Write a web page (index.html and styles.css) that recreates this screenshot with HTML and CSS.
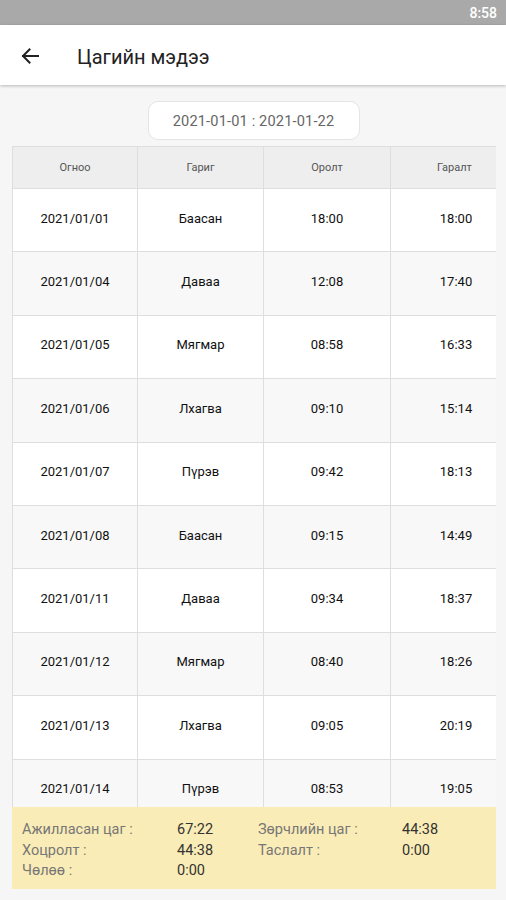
FILE: index.html
```html
<!DOCTYPE html>
<html lang="mn">
<head>
<meta charset="utf-8">
<title>Цагийн мэдээ</title>
<link rel="stylesheet" href="styles.css">
</head>
<body>
<div class="phone">
  <div class="statusbar"><span class="time">8:58</span></div>
  <header class="appbar">
    <svg class="back" width="18" height="16" viewBox="0 0 18 16" aria-hidden="true">
      <path d="M17 8H2M8.5 1.5L2 8l6.5 6.5" fill="none" stroke="#222" stroke-width="2" stroke-linecap="square"/>
    </svg>
    <h1 class="title">Цагийн мэдээ</h1>
  </header>
  <main class="content">
    <div class="range-wrap"><div class="range">2021-01-01 : 2021-01-22</div></div>
    <div class="table-wrap">
      <table class="tbl">
        <colgroup><col class="c1"><col class="c2"><col class="c3"><col class="c4"></colgroup>
        <thead>
          <tr><th>Огноо</th><th>Гариг</th><th>Оролт</th><th>Гаралт</th></tr>
        </thead>
        <tbody>
          <tr><td>2021/01/01</td><td>Баасан</td><td>18:00</td><td>18:00</td></tr>
          <tr><td>2021/01/04</td><td>Даваа</td><td>12:08</td><td>17:40</td></tr>
          <tr><td>2021/01/05</td><td>Мягмар</td><td>08:58</td><td>16:33</td></tr>
          <tr><td>2021/01/06</td><td>Лхагва</td><td>09:10</td><td>15:14</td></tr>
          <tr><td>2021/01/07</td><td>Пүрэв</td><td>09:42</td><td>18:13</td></tr>
          <tr><td>2021/01/08</td><td>Баасан</td><td>09:15</td><td>14:49</td></tr>
          <tr><td>2021/01/11</td><td>Даваа</td><td>09:34</td><td>18:37</td></tr>
          <tr><td>2021/01/12</td><td>Мягмар</td><td>08:40</td><td>18:26</td></tr>
          <tr><td>2021/01/13</td><td>Лхагва</td><td>09:05</td><td>20:19</td></tr>
          <tr><td>2021/01/14</td><td>Пүрэв</td><td>08:53</td><td>19:05</td></tr>
        </tbody>
      </table>
    </div>
    <section class="summary">
      <span class="lbl">Ажилласан цаг :</span><span class="val">67:22</span>
      <span class="lbl">Зөрчлийн цаг :</span><span class="val">44:38</span>
      <span class="lbl">Хоцролт :</span><span class="val">44:38</span>
      <span class="lbl">Таслалт :</span><span class="val">0:00</span>
      <span class="lbl">Чөлөө :</span><span class="val">0:00</span>
    </section>
  </main>
</div>
</body>
</html>
```
FILE: styles.css
```css
* { box-sizing: border-box; }
html, body { margin: 0; padding: 0; }
body {
  font-family: Roboto, "Noto Sans", "DejaVu Sans", sans-serif;
  background: #f6f6f6;
  color: #222;
}
.phone { width: 506px; height: 900px; overflow: hidden; background: #f6f6f6; }
.statusbar {
  height: 25px;
  background: #a9a9a9;
  display: flex;
  justify-content: flex-end;
  align-items: center;
  padding-right: 9px;
}
.time { color: #fff; font-size: 14px; font-weight: 500; }
.appbar {
  height: 60px;
  background: #fff;
  display: flex;
  align-items: center;
  padding-left: 21px;
  box-shadow: 0 1px 3px rgba(0,0,0,0.25);
  position: relative;
  z-index: 1;
}
.back { flex: none; margin-top: 1px; }
.title {
  margin: 0 0 0 38px;
  font-size: 20px;
  font-weight: 400;
  color: #222;
  line-height: 1;
  padding-top: 3px;
}
.content { display: flex; flex-direction: column; }
.range-wrap { display: flex; justify-content: center; padding-top: 16px; padding-left: 1px; }
.range {
  width: 212px;
  height: 39px;
  background: #fff;
  border: 1px solid #e4e4e4;
  border-radius: 10px;
  font-size: 14.6px;
  letter-spacing: 0.15px;
  color: #666;
  display: flex;
  align-items: center;
  justify-content: center;
}
.table-wrap {
  margin: 6px 10px 0 12px;
  height: 661px;
  overflow: hidden;
}
.tbl {
  border-collapse: collapse;
  table-layout: fixed;
  width: 506px;
}
.c1 { width: 125px; }
.c2 { width: 126px; }
.c3 { width: 127px; }
.c4 { width: 128px; }
.tbl th, .tbl td {
  border: 1px solid #dedede;
  text-align: center;
  padding: 0;
}
.tbl th {
  height: 42px;
  background: #eeeeee;
  font-size: 11px;
  font-weight: 400;
  color: #555;
}
.tbl td {
  height: 63.4px;
  padding-bottom: 4px;
  font-size: 13px;
  color: #111;
  font-weight: 400;
  background: #fff;
}
.tbl tbody tr:nth-child(even) td { background: #f8f8f8; }
.tbl td:nth-child(4) { padding-left: 3px; }
.summary {
  margin: 0 10px 0 12px;
  background: #faecb6;
  display: grid;
  grid-template-columns: 155px 81px 144px 1fr;
  padding: 13px 0 7px 10px;
  font-size: 14.5px;
  line-height: 20.5px;
}
.lbl { color: #777; }
.val { color: #333; }
```
